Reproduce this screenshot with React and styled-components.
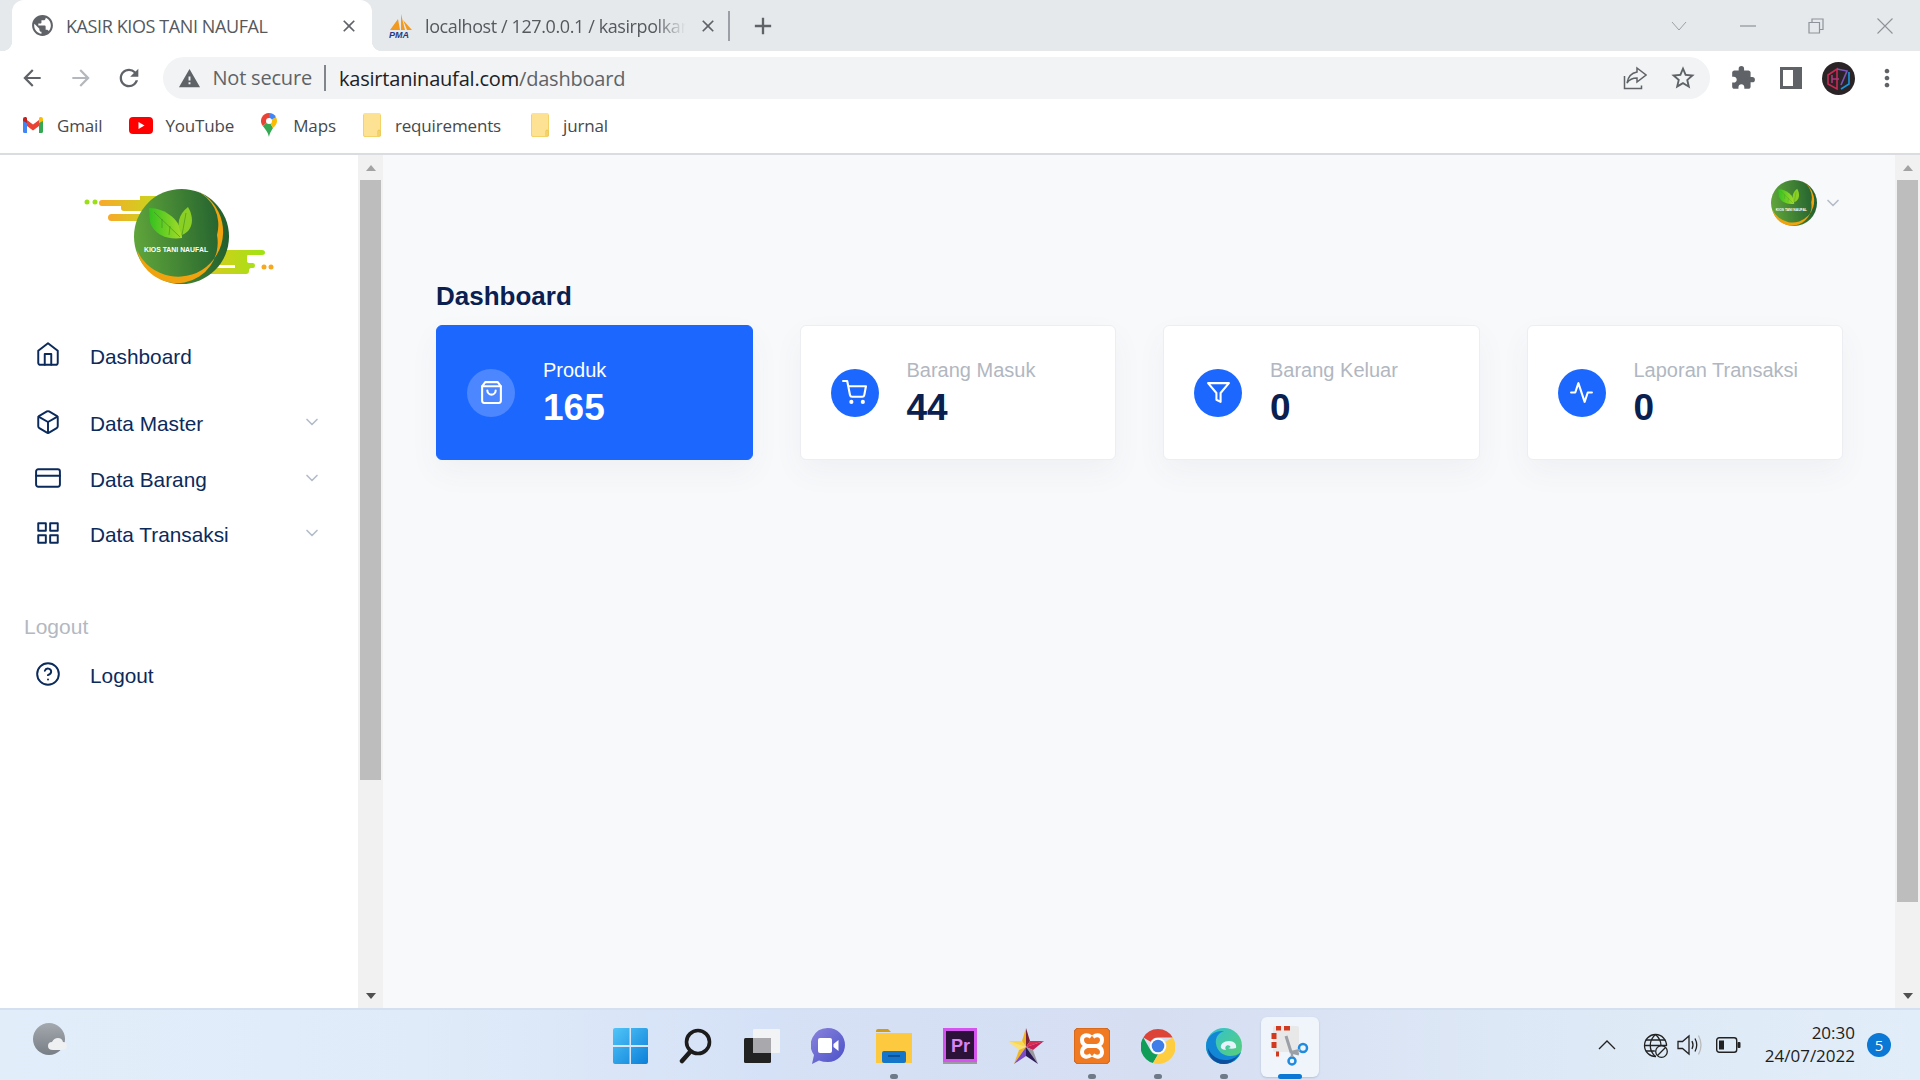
import React from "react";
import styled, { createGlobalStyle } from "styled-components";
import { FiHome, FiBox, FiCreditCard, FiGrid, FiHelpCircle, FiChevronDown, FiShoppingBag, FiShoppingCart, FiFilter, FiActivity } from "react-icons/fi";
import { MdArrowBack, MdArrowForward, MdRefresh, MdWarning, MdStarBorder, MdExtension, MdMoreVert, MdPublic, MdClose, MdAdd } from "react-icons/md";

const GlobalStyle = createGlobalStyle`
  html, body {
    margin: 0;
    padding: 0;
    width: 1920px;
    height: 1080px;
    overflow: hidden;
    background: #fff;
    font-family: "Liberation Sans", Arial, sans-serif;
  }
  * { box-sizing: border-box; }
`;

const Screen = styled.div`
  width: 1920px;
  height: 1080px;
  display: flex;
  flex-direction: column;
  overflow: hidden;
`;

/* browser chrome */
const TabStrip = styled.div`
  height: 51px;
  background: #e6e9ec;
  display: flex;
  align-items: stretch;
  flex: none;
`;

const ActiveTab = styled.div`
  position: relative;
  width: 360px;
  margin-left: 12px;
  padding: 0 13px 0 18px;
  background: #fff;
  border-radius: 12px 12px 0 0;
  display: flex;
  align-items: center;
  gap: 11px;
  color: #5f6368;

  &::before, &::after {
    content: "";
    position: absolute;
    bottom: 0;
    width: 10px;
    height: 10px;
  }
  &::before {
    left: -10px;
    background: radial-gradient(circle at 0 0, #e6e9ec 10px, #fff 10.5px);
  }
  &::after {
    right: -10px;
    background: radial-gradient(circle at 100% 0, #e6e9ec 10px, #fff 10.5px);
  }
`;

const TabTitle = styled.span`
  flex: 1;
  font-family: "Open Sans", sans-serif;
  font-size: 18px;
  letter-spacing: -0.4px;
  white-space: nowrap;
  overflow: hidden;
  color: ${(p) => p.$color || "#55595e"};
  ${(p) => p.$fade && "-webkit-mask-image: linear-gradient(90deg, #000 88%, transparent 100%);"}
`;

const SecondTab = styled.div`
  width: 356px;
  padding: 0 10px 0 17px;
  display: flex;
  align-items: center;
  gap: 12px;
  color: #5f6368;
`;

const TabDivider = styled.div`
  width: 2px;
  height: 30px;
  margin: 11px 0 0;
  background: #9aa0a6;
`;

const NewTab = styled.div`
  width: 66px;
  display: flex;
  align-items: center;
  justify-content: center;
  color: #5f6368;
`;

const WindowControls = styled.div`
  margin-left: auto;
  display: flex;
  align-items: center;
  padding-right: 1px;
`;

const WindowButton = styled.div`
  width: 68.5px;
  display: flex;
  align-items: center;
  justify-content: center;
`;

const Toolbar = styled.div`
  height: 48px;
  padding: 6px 0 0 8px;
  background: #fff;
  display: flex;
  align-items: center;
  flex: none;
`;

const NavButton = styled.div`
  width: 48.5px;
  display: flex;
  justify-content: center;
  color: ${(p) => (p.$muted ? "#b4b7bb" : "#5f6368")};
`;

const Omnibox = styled.div`
  width: 1547px;
  height: 42px;
  margin-left: 9px;
  padding: 0 13px 0 15px;
  background: #f1f3f4;
  border-radius: 21px;
  display: flex;
  align-items: center;
  color: #5f6368;
  font-family: "Open Sans", sans-serif;
  font-size: 20px;
  letter-spacing: -0.2px;
`;

const SecurityLabel = styled.span`
  margin-left: 12px;
  padding-right: 12px;
  border-right: 2px solid #80868b;
  line-height: 26px;
`;

const UrlHost = styled.span`
  margin-left: 13px;
  color: #202124;
`;

const OmniActions = styled.div`
  margin-left: auto;
  display: flex;
  align-items: center;
  gap: 22px;
`;

const ToolActions = styled.div`
  margin-left: 9px;
  display: flex;
  align-items: center;
`;

const ToolSlot = styled.div`
  width: 48px;
  display: flex;
  justify-content: center;
  color: #5f6368;
`;

const Bookmarks = styled.div`
  height: 54px;
  padding: 0 0 2px 22px;
  background: #fff;
  display: flex;
  align-items: center;
  flex: none;
`;

const Bookmark = styled.div`
  display: flex;
  align-items: center;
  gap: ${(p) => p.$gap || 13}px;
  margin-right: ${(p) => p.$mr || 27}px;
  font-family: "Open Sans", sans-serif;
  font-size: 17px;
  letter-spacing: -0.15px;
  color: #46494d;
`;

/* page */
const Page = styled.div`
  flex: 1;
  min-height: 0;
  display: flex;
  border-top: 2px solid #dadce0;
`;

const Sidebar = styled.aside`
  width: 358px;
  padding-top: 20px;
  background: #fff;
  flex: none;
`;

const LogoWrap = styled.div`
  height: 120px;
  padding-left: 70px;
  margin-bottom: 47px;
`;

const NavRow = styled.div`
  height: 30px;
  margin-top: ${(p) => p.$top || 0}px;
  padding: 0 36px 0 35px;
  display: flex;
  align-items: center;
  font-size: 20.8px;
  color: #0b2a5c;

  > svg:first-child {
    margin-right: 29px;
    margin-top: ${(p) => p.$iconTop ?? -4}px;
  }
`;

const Caret = styled(FiChevronDown)`
  margin-left: auto;
  margin-top: -4px;
  color: #b4bcc8;
`;

const SectionLabel = styled.div`
  margin: 64px 0 0 24px;
  font-size: 21px;
  line-height: 26px;
  color: #b3b8c1;
`;

const Scrollbar = styled.div`
  width: 25px;
  padding: 0 2px;
  background: #f1f1f1;
  display: flex;
  flex-direction: column;
  align-items: stretch;
  flex: none;
`;

const ScrollArrow = styled.div`
  height: 25px;
  display: flex;
  align-items: center;
  justify-content: center;
  margin-top: ${(p) => (p.$down ? "auto" : "0")};

  &::before {
    content: "";
    border-left: 5px solid transparent;
    border-right: 5px solid transparent;
    ${(p) => (p.$down ? "border-top: 6px solid #505050;" : "border-bottom: 6px solid #a3a3a3;")}
  }
`;

const ScrollThumb = styled.div`
  height: ${(p) => p.$h}px;
  background: #bdbdbd;
`;

const Main = styled.main`
  flex: 1;
  min-width: 0;
  padding: 25px 52px 0 53px;
  background: #f8f9fb;
`;

const TopBar = styled.div`
  display: flex;
  justify-content: flex-end;
  align-items: center;
  gap: 6px;
  height: 46px;
`;

const TopCaret = styled(FiChevronDown)`
  color: #b4bcc8;
`;

const Title = styled.h1`
  margin: 55px 0 14px;
  font-size: 26px;
  line-height: 30px;
  font-weight: 700;
  color: #0a2050;
`;

const CardGrid = styled.div`
  display: grid;
  grid-template-columns: repeat(4, 1fr);
  gap: 47px;
`;

const Card = styled.div`
  height: 135px;
  padding-left: 30px;
  display: flex;
  align-items: center;
  gap: 28px;
  border-radius: 6px;
  border: 1px solid ${(p) => (p.$primary ? "#1c68ff" : "#eceef2")};
  background: ${(p) => (p.$primary ? "#1c68ff" : "#fff")};
  box-shadow: 0 12px 30px rgba(60, 70, 90, 0.05);
`;

const CardIcon = styled.div`
  width: 48px;
  height: 48px;
  border-radius: 50%;
  display: flex;
  align-items: center;
  justify-content: center;
  background: ${(p) => (p.$primary ? "#4d87ff" : "#1c68ff")};
  color: #fff;
  flex: none;
`;

const CardText = styled.div`
  padding-top: 2px;
`;

const CardLabel = styled.div`
  font-size: 20px;
  line-height: 24px;
  color: ${(p) => (p.$primary ? "#fff" : "#b1b7c1")};
`;

const CardValue = styled.div`
  margin-top: 5px;
  font-size: 37px;
  line-height: 42px;
  font-weight: 700;
  color: ${(p) => (p.$primary ? "#fff" : "#0a2050")};
`;

/* windows taskbar */
const Taskbar = styled.footer`
  height: 72px;
  flex: none;
  display: grid;
  grid-template-columns: 1fr auto 1fr;
  align-items: center;
  border-top: 2px solid #d4dff0;
  background: linear-gradient(90deg, #e1eefa 0%, #e0ebf9 22%, #d5e1f6 40%, #d6def2 60%, #dde8f6 78%, #e1edf8 100%);
`;

const Weather = styled.div`
  padding: 0 0 10px 33px;
  display: flex;
`;

const Apps = styled.div`
  display: flex;
`;

const AppSlot = styled.div`
  position: relative;
  width: 66px;
  height: 58px;
  margin: 2px 0 0;
  display: flex;
  align-items: center;
  justify-content: center;

  ${(p) => p.$active && `
    &::before {
      content: "";
      position: absolute;
      inset: 0 4px -2px 4px;
      background: #f0f5fc;
      border-radius: 6px;
      box-shadow: 0 1px 2px rgba(80, 100, 130, 0.25);
    }
  `}

  > svg { position: relative; }
`;

const AppDot = styled.span`
  position: absolute;
  bottom: -4px;
  left: 50%;
  width: ${(p) => (p.$active ? 24 : 8)}px;
  height: 5px;
  margin-left: ${(p) => (p.$active ? -12 : -4)}px;
  border-radius: 3px;
  background: ${(p) => (p.$active ? "#0a78d4" : "#6f7a88")};
`;

const Tray = styled.div`
  display: flex;
  justify-content: flex-end;
  align-items: center;
  padding-right: 29px;
  color: #222;
`;

const TrayIcon = styled.div`
  display: flex;
  margin-right: ${(p) => p.$mr}px;
`;

const Clock = styled.div`
  font-family: "Open Sans", sans-serif;
  font-size: 17px;
  line-height: 23px;
  text-align: right;
  color: #1c1c1c;
  margin-top: -2px;
`;

const Badge = styled.div`
  width: 24px;
  height: 24px;
  margin-left: 12px;
  border-radius: 50%;
  background: #0a78d4;
  color: #fff;
  font-family: "Open Sans", sans-serif;
  font-size: 15px;
  display: flex;
  align-items: center;
  justify-content: center;
`;

/* drawings */
const Logo = ({ id, full }) => (
  <svg width={full ? 220 : 46} height={full ? 120 : 46} viewBox={full ? "0 0 220 120" : "64 14 95 95"}>
    <defs>
      <linearGradient id={id + "g"} x1="0" x2="1" y1="0.3" y2="0.2">
        <stop offset="0" stopColor="#5ea43a" />
        <stop offset="1" stopColor="#1f5c2e" />
      </linearGradient>
      <linearGradient id={id + "s"} x1="0" x2="1">
        <stop offset="0" stopColor="#f8a92a" />
        <stop offset="1" stopColor="#c6d81c" />
      </linearGradient>
      <linearGradient id={id + "t"} x1="0" x2="1">
        <stop offset="0" stopColor="#e3c71e" />
        <stop offset="1" stopColor="#9fe414" />
      </linearGradient>
      <linearGradient id={id + "l"} x1="0" x2="1">
        <stop offset="0" stopColor="#32c020" />
        <stop offset="1" stopColor="#a6dc28" />
      </linearGradient>
    </defs>
    {full && (
      <g>
        <circle cx="17" cy="27" r="2.500" fill="#9be015" />
        <circle cx="25" cy="27" r="2.500" fill="#9be015" />
        <path d="M32 25h38v-4h20v15H54q-3 0-3-3v-2H32q-3 0-3-3t3-3z" fill={`url(#${id}s)`} />
        <rect x="38" y="39" width="45" height="7" rx="3.500" fill={`url(#${id}s)`} />
        <path d="M150 75h42q3 0 3 2.500t-3 2.500h-14q-1 0-1 2v4q0 2 3 2h3q2 0 2 2.500t-2 2.500h-2q-2 0-2 3t-3 3h-48z" fill={`url(#${id}t)`} />
        <rect x="135" y="90" width="30" height="3" fill="#fff" />
        <circle cx="194" cy="92" r="2.500" fill="#f6a81e" />
        <circle cx="201" cy="92" r="2.500" fill="#f6a81e" />
      </g>
    )}
    <circle cx="111.500" cy="61.500" r="47.500" fill={`url(#${id}g)`} />
    <path d="M125 15A45 45 0 1 1 67 75A40 40 0 0 0 147 60A38 38 0 0 0 125 15z" fill="#f0a30f" />
    <path d="M79 33C95 33 112 45 112 63C98 65 84 60 80 47z" fill={`url(#${id}l)`} />
    <path d="M118 32C124 42 124 55 112 60C106 50 108 40 118 32z" fill="#8ad024" />
    <path d="M84 37L110 62M92 44v9M100 51l-1 9M116 38L112 60" stroke="#3d8f24" strokeWidth="0.600" fill="none" />
    <text x="106" y="77" textAnchor="middle" fontFamily="Liberation Sans" fontWeight="700" fontSize="6.900" fill="#fff">KIOS TANI NAUFAL</text>
  </svg>
);

const GmailIcon = () => (
  <svg width="22" height="18" viewBox="0 0 22 18">
    <path d="M1 17V3l4 3v11H2.500Q1 17 1 15.500z" fill="#4285f4" />
    <path d="M21 17V3l-4 3v11h2.500q1.500 0 1.500-1.500z" fill="#34a853" />
    <path d="M5 10V4l6 4.500L17 4v6l-6 4.500z" fill="#ea4335" />
    <path d="M1 5V3q0-2.500 3-2L5 2v5z" fill="#c5221f" />
    <path d="M21 5V3q0-2.500-3-2l-1 1v5z" fill="#fbbc04" />
  </svg>
);

const YoutubeIcon = () => (
  <svg width="24" height="17" viewBox="0 0 24 17">
    <rect width="24" height="17" rx="4" fill="#f00" />
    <path d="M9.500 5v7l6-3.500z" fill="#fff" />
  </svg>
);

const MapsIcon = () => (
  <svg width="16" height="24" viewBox="0 0 16 24">
    <path d="M8 0a8 8 0 0 0-6.200 13L8 8z" fill="#ea4335" />
    <path d="M1.800 13C4 16 7 19 8 24c1-5 3-7 4-9L8 8z" fill="#34a853" />
    <path d="M12 15q4-3.500 4-7a8 8 0 0 0-1-3.800L8 8z" fill="#fbbc04" />
    <path d="M8 0a8 8 0 0 1 7 4.200L8 8z" fill="#4285f4" />
    <circle cx="8" cy="8" r="3" fill="#fff" />
  </svg>
);

const BookmarkFolder = () => (
  <svg width="18" height="24" viewBox="0 0 18 24">
    <path d="M2 0h14q2 0 2 2v20q0 2-2 2H2q-2 0-2-2V2q0-2 2-2z" fill="#fde293" />
    <path d="M0.500 2v20q0 1.500 1.500 1.500h14q1.500 0 1.500-1.500V2" fill="none" stroke="#f3d268" />
    <path d="M15 23v-5q0-1 1-1t1 1v5" fill="none" stroke="#e9c24a" />
  </svg>
);

const PmaIcon = () => (
  <svg width="24" height="26" viewBox="0 0 24 26">
    <path d="M1 17L9 6l2 11zM12 17V1l4 16zM14 7l9 10h-5z" fill="#f29a1f" />
    <text x="0" y="25" fontFamily="Liberation Sans" fontWeight="700" fontStyle="italic" fontSize="9" fill="#1f3c88">PMA</text>
  </svg>
);

const ShareIcon = () => (
  <svg width="24" height="24" viewBox="0 0 24 24" fill="none" stroke="#5f6368" strokeWidth="1.500">
    <path d="M1.500 10v12.500h17v-3" />
    <path d="M14 2l9 7-9 7v-4c-5 0-8 2-10 5 1-6 4-10 10-11z" />
  </svg>
);

const SidePanelIcon = () => (
  <svg width="22" height="22" viewBox="0 0 22 22">
    <path d="M0 0h22v22H0z" fill="#5f6368" />
    <path d="M3 3h10v16H3z" fill="#fff" />
  </svg>
);

const ProfileIcon = () => (
  <svg width="33" height="33" viewBox="0 0 33 33" fill="none">
    <circle cx="16.500" cy="16.500" r="16.500" fill="#2a2427" />
    <path d="M6 13l9-6v20l-9-5z" stroke="#c72a55" strokeWidth="1.600" />
    <path d="M15 7l10 2-6 14" stroke="#7b56b8" strokeWidth="1.600" />
    <path d="M27 10v12l-8 5" stroke="#1b97e0" strokeWidth="1.600" />
    <path d="M10 13v8M10 17h7" stroke="#a83a7a" strokeWidth="1.600" />
  </svg>
);

const WinChevron = () => (
  <svg width="16" height="10" viewBox="0 0 16 10" fill="none" stroke="#9aa0a6" strokeWidth="1">
    <path d="M1 1l7 8 7-8" />
  </svg>
);

const WinMin = () => (
  <svg width="16" height="2" viewBox="0 0 16 2"><path d="M0 1h16" stroke="#8d9399" strokeWidth="1.200" /></svg>
);

const WinRestore = () => (
  <svg width="16" height="16" viewBox="0 0 16 16" fill="none" stroke="#8d9399" strokeWidth="1.200">
    <path d="M1 4.500h10.500V15H1z" />
    <path d="M4 4.500V1h11v10.500h-3.500" />
  </svg>
);

const WinClose = () => (
  <svg width="16" height="16" viewBox="0 0 16 16" fill="none" stroke="#8d9399" strokeWidth="1.100">
    <path d="M0.500 0.500l15 15M15.500 0.500l-15 15" />
  </svg>
);

const WeatherIcon = () => (
  <svg width="36" height="34" viewBox="0 0 36 34">
    <defs>
      <linearGradient id="moon" x1="0" x2="0" y1="0" y2="1">
        <stop offset="0" stopColor="#a3a9ae" />
        <stop offset="1" stopColor="#787e85" />
      </linearGradient>
    </defs>
    <circle cx="16" cy="16" r="16" fill="url(#moon)" />
    <path d="M20 27q-5 0-5-4t4-4q2-4 6-4t5 4q4 0 4 4t-4 4z" fill="#eef0f2" />
  </svg>
);

const WinLogo = () => (
  <svg width="35" height="36" viewBox="0 0 35 36">
    <defs>
      <linearGradient id="winA" x1="0" x2="1" y1="0" y2="1">
        <stop offset="0" stopColor="#52c5f8" />
        <stop offset="1" stopColor="#0a7fd8" />
      </linearGradient>
    </defs>
    <path d="M2 0h14.500v17H0V2q0-2 2-2zM18 0h15q2 0 2 2v15H18zM0 19h16.500v17H2q-2 0-2-2zM18 19h17v15q0 2-2 2H18z" fill="url(#winA)" />
  </svg>
);

const SearchIcon = () => (
  <svg width="34" height="36" viewBox="0 0 34 36" fill="none" stroke="#1c1c1c" strokeLinecap="round">
    <circle cx="19" cy="14" r="11.500" strokeWidth="3.600" />
    <path d="M11 24l-8 9" strokeWidth="4.500" />
  </svg>
);

const TaskViewIcon = () => (
  <svg width="36" height="34" viewBox="0 0 36 34">
    <rect x="0" y="9" width="27" height="25" rx="1.500" fill="#222" />
    <rect x="9" y="0" width="27" height="24" rx="1" fill="#f5f5f5" fillOpacity="0.9" />
    <rect x="9" y="9" width="18" height="15" fill="#a9a9ad" />
  </svg>
);

const ChatIcon = () => (
  <svg width="34" height="36" viewBox="0 0 34 36">
    <defs>
      <linearGradient id="chat" x1="0" x2="1" y1="0" y2="1">
        <stop offset="0" stopColor="#8a84dc" />
        <stop offset="1" stopColor="#4a50c8" />
      </linearGradient>
    </defs>
    <path d="M17 0a17 17 0 0 1 0 34q-5 0-9-1.500L1 36l2-9A17 17 0 0 1 17 0z" fill="url(#chat)" />
    <rect x="7" y="10" width="14" height="15" rx="2" fill="#fff" />
    <path d="M22.500 16l5-4v11l-5-4z" fill="#fff" />
  </svg>
);

const FolderIcon = () => (
  <svg width="36" height="34" viewBox="0 0 36 34">
    <path d="M0 2q0-2 2-2h10l3 3h-15z" fill="#d69c10" />
    <path d="M0 4h36v30H0z" fill="#fdc93f" />
    <rect x="6" y="22" width="24" height="12" rx="2" fill="#1576c9" />
    <rect x="12" y="26" width="12" height="2" fill="#0d5299" />
  </svg>
);

const PremiereIcon = () => (
  <svg width="36" height="36" viewBox="0 0 36 36">
    <rect width="34" height="34" x="1" fill="#d454f0" />
    <rect width="28" height="28" x="4" y="3" fill="#2c1238" />
    <rect x="1" y="34" width="34" height="2" fill="#9c9aa0" />
    <text x="9" y="24" fontFamily="Liberation Sans" fontWeight="700" fontSize="18" fill="#d885f2">Pr</text>
  </svg>
);

const StarIcon = () => (
  <svg width="36" height="36" viewBox="0 0 36 36">
    <path d="M18 0l4 13-4 6z" fill="#7c2236" />
    <path d="M18 0l-4 13 4 6z" fill="#f0b420" />
    <path d="M22 13h14l-18 6z" fill="#d92c50" />
    <path d="M14 13H0l18 6z" fill="#f9d64a" />
    <path d="M36 13L25 22 18 19z" fill="#c71e55" />
    <path d="M0 13l11 9 7-3z" fill="#fbe074" />
    <path d="M25 22l5 14-12-17z" fill="#9a9a9e" />
    <path d="M11 22L6 36l12-17z" fill="#f3b61f" />
    <path d="M30 36l-12-8V19z" fill="#2b1a55" />
    <path d="M6 36l12-8V19z" fill="#7a4bc4" />
  </svg>
);

const XamppIcon = () => (
  <svg width="36" height="36" viewBox="0 0 36 36" fill="none">
    <rect width="36" height="36" rx="5" fill="#f07a22" />
    <rect width="36" height="36" rx="5" fill="none" stroke="#c65a12" strokeWidth="1" />
    <path d="M17 9c-4-3-9-2-9 3 0 3 2 5 5 6-3 1-5 3-5 6 0 5 5 6 9 3M19 9c4-3 9-2 9 3 0 3-2 5-5 6 3 1 5 3 5 6 0 5-5 6-9 3M14 18h8" stroke="#fff" strokeWidth="4" />
  </svg>
);

const ChromeIcon = () => (
  <svg width="34" height="36" viewBox="0 0 34 34">
    <path d="M17 0a17 17 0 0 1 14.700 8.500H17a8.500 8.500 0 0 0-7.400 4.300L2.300 8.500A17 17 0 0 1 17 0z" fill="#db4437" />
    <path d="M2.300 8.500l7.300 12.700A8.500 8.500 0 0 0 17 25.500L12 34A17 17 0 0 1 2.300 8.500z" fill="#0f9d58" />
    <path d="M31.700 8.500A17 17 0 0 1 12 34l5-8.500a8.500 8.500 0 0 0 7.400-12.700z" fill="#ffcd40" />
    <circle cx="17" cy="17" r="8" fill="#fff" />
    <circle cx="17" cy="17" r="6.300" fill="#3f7de8" />
  </svg>
);

const EdgeIcon = () => (
  <svg width="36" height="36" viewBox="0 0 36 36">
    <defs>
      <linearGradient id="edgeA" x1="0" x2="1" y1="0" y2="1">
        <stop offset="0" stopColor="#2fc1d8" />
        <stop offset="1" stopColor="#5ed06a" />
      </linearGradient>
    </defs>
    <circle cx="18" cy="18" r="18" fill="url(#edgeA)" />
    <path d="M0 18C0 8 9 2 18 3c-6 2-9 7-8 13 1 7 7 12 14 12 4 0 8-1 11-4-2 7-9 12-17 12C8 36 0 28 0 18z" fill="#1287d6" />
    <path d="M18 36C9 36 2 29 2 20c3 8 10 12 17 12 6 0 11-2 14-6-3 6-9 10-15 10z" fill="#0c4f9e" />
    <path d="M15 20c-1-4 3-7 8-7 5 0 8 3 7 7-3 1-6 1-8 0 2 0 3-1 2-2-3-2-6 1-4 4-2 0-4-1-5-2z" fill="#e8f2fa" />
  </svg>
);

const SnipIcon = () => (
  <svg width="40" height="40" viewBox="0 0 40 40" fill="none">
    <rect x="3" y="0" width="26" height="26" rx="2" fill="#e8e8e8" />
    <path d="M5 0h5M13 0h6M3 5v6M3 14v6M5 26h3" stroke="#d13a1e" strokeWidth="5" transform="translate(1 2)" />
    <path d="M16 10l5 16 8 2" stroke="#9aa0a6" strokeWidth="3" />
    <circle cx="33" cy="22" r="4" stroke="#1e8be0" strokeWidth="2.500" />
    <circle cx="22" cy="35" r="3.500" stroke="#1e8be0" strokeWidth="2.500" />
    <path d="M22 31v-5l8-2" stroke="#9aa0a6" strokeWidth="2.500" />
  </svg>
);

const GlobeBlocked = () => (
  <svg width="25" height="25" viewBox="0 0 25 25" fill="none" stroke="#222" strokeWidth="1.300">
    <path d="M13 23.500A11 11 0 1 1 23.500 13" />
    <path d="M1.500 12.500h22M2.800 7h19.500M2.800 18h9M12.500 1.500c-7 6-7 16 0 22M12.500 1.500c4 3.500 5.500 8 5.500 11" />
    <circle cx="18.500" cy="18.500" r="5.800" />
    <path d="M14.500 22.500l8-8" />
  </svg>
);

const Speaker = () => (
  <svg width="26" height="24" viewBox="0 0 26 24" fill="none" stroke="#222" strokeWidth="1.300">
    <path d="M1 8.500v7h4.500L12 21V3L5.500 8.500z" />
    <path d="M15 8q2 4 0 8M18 5.500q3.500 6.500 0 13" />
    <path d="M21.500 2.500q5 9.500 0 19" stroke="#bbb" />
  </svg>
);

const Battery = () => (
  <svg width="25" height="16" viewBox="0 0 25 16" fill="none">
    <rect x="0.700" y="0.700" width="20" height="14.600" rx="2.500" stroke="#222" strokeWidth="1.400" />
    <rect x="3" y="3.500" width="5" height="9" fill="#222" />
    <rect x="21.500" y="5" width="3" height="6" rx="1" fill="#222" />
  </svg>
);

const TrayChevron = () => (
  <svg width="18" height="10" viewBox="0 0 18 10" fill="none" stroke="#222" strokeWidth="1.300">
    <path d="M1 9l8-8 8 8" />
  </svg>
);

const menu = [
  { icon: FiHome, label: "Dashboard", top: 0, iconTop: -6 },
  { icon: FiBox, label: "Data Master", top: 37, iconTop: -5, caret: true },
  { icon: FiCreditCard, label: "Data Barang", top: 26, caret: true },
  { icon: FiGrid, label: "Data Transaksi", top: 25, caret: true },
];

const cards = [
  { icon: FiShoppingBag, label: "Produk", value: "165", primary: true },
  { icon: FiShoppingCart, label: "Barang Masuk", value: "44" },
  { icon: FiFilter, label: "Barang Keluar", value: "0" },
  { icon: FiActivity, label: "Laporan Transaksi", value: "0" },
];

const apps = [
  { icon: WinLogo },
  { icon: SearchIcon },
  { icon: TaskViewIcon },
  { icon: ChatIcon },
  { icon: FolderIcon, dot: true },
  { icon: PremiereIcon },
  { icon: StarIcon },
  { icon: XamppIcon, dot: true },
  { icon: ChromeIcon, dot: true },
  { icon: EdgeIcon, dot: true },
  { icon: SnipIcon, active: true },
];

const App = () => (
  <Screen>
    <GlobalStyle />
    <TabStrip>
      <ActiveTab>
        <MdPublic size={25} color="#5f6368" />
        <TabTitle>KASIR KIOS TANI NAUFAL</TabTitle>
        <MdClose size={20} />
      </ActiveTab>
      <SecondTab>
        <PmaIcon />
        <TabTitle $fade>localhost / 127.0.0.1 / kasirpolkam</TabTitle>
        <MdClose size={20} />
      </SecondTab>
      <TabDivider />
      <NewTab><MdAdd size={28} /></NewTab>
      <WindowControls>
        <WindowButton><WinChevron /></WindowButton>
        <WindowButton><WinMin /></WindowButton>
        <WindowButton><WinRestore /></WindowButton>
        <WindowButton><WinClose /></WindowButton>
      </WindowControls>
    </TabStrip>

    <Toolbar>
      <NavButton><MdArrowBack size={26} /></NavButton>
      <NavButton $muted><MdArrowForward size={26} /></NavButton>
      <NavButton><MdRefresh size={28} /></NavButton>
      <Omnibox>
        <MdWarning size={23} />
        <SecurityLabel>Not secure</SecurityLabel>
        <UrlHost>kasirtaninaufal.com</UrlHost>/dashboard
        <OmniActions>
          <ShareIcon />
          <MdStarBorder size={28} />
        </OmniActions>
      </Omnibox>
      <ToolActions>
        <ToolSlot><MdExtension size={26} /></ToolSlot>
        <ToolSlot><SidePanelIcon /></ToolSlot>
        <ToolSlot><ProfileIcon /></ToolSlot>
        <ToolSlot><MdMoreVert size={28} /></ToolSlot>
      </ToolActions>
    </Toolbar>

    <Bookmarks>
      <Bookmark><GmailIcon />Gmail</Bookmark>
      <Bookmark $gap={12}><YoutubeIcon />YouTube</Bookmark>
      <Bookmark $gap={16}><MapsIcon />Maps</Bookmark>
      <Bookmark $gap={14} $mr={30}><BookmarkFolder />requirements</Bookmark>
      <Bookmark $gap={14}><BookmarkFolder />jurnal</Bookmark>
    </Bookmarks>

    <Page>
      <Sidebar>
        <LogoWrap><Logo id="side" full /></LogoWrap>
        {menu.map((item) => (
          <NavRow key={item.label} $top={item.top} $iconTop={item.iconTop}>
            <item.icon size={26} strokeWidth={1.8} />
            {item.label}
            {item.caret && <Caret size={20} />}
          </NavRow>
        ))}
        <SectionLabel>Logout</SectionLabel>
        <NavRow $top={21}>
          <FiHelpCircle size={26} strokeWidth={1.8} />
          Logout
        </NavRow>
      </Sidebar>
      <Scrollbar>
        <ScrollArrow />
        <ScrollThumb $h={600} />
        <ScrollArrow $down />
      </Scrollbar>
      <Main>
        <TopBar>
          <Logo id="avatar" />
          <TopCaret size={20} />
        </TopBar>
        <Title>Dashboard</Title>
        <CardGrid>
          {cards.map((card) => (
            <Card key={card.label} $primary={card.primary}>
              <CardIcon $primary={card.primary}><card.icon size={25} strokeWidth={2} /></CardIcon>
              <CardText>
                <CardLabel $primary={card.primary}>{card.label}</CardLabel>
                <CardValue $primary={card.primary}>{card.value}</CardValue>
              </CardText>
            </Card>
          ))}
        </CardGrid>
      </Main>
      <Scrollbar>
        <ScrollArrow />
        <ScrollThumb $h={722} />
        <ScrollArrow $down />
      </Scrollbar>
    </Page>

    <Taskbar>
      <Weather><WeatherIcon /></Weather>
      <Apps>
        {apps.map((app, i) => (
          <AppSlot key={i} $active={app.active}>
            <app.icon />
            {(app.dot || app.active) && <AppDot $active={app.active} />}
          </AppSlot>
        ))}
      </Apps>
      <Tray>
        <TrayIcon $mr={27}><TrayChevron /></TrayIcon>
        <TrayIcon $mr={9}><GlobeBlocked /></TrayIcon>
        <TrayIcon $mr={13}><Speaker /></TrayIcon>
        <TrayIcon $mr={24}><Battery /></TrayIcon>
        <Clock>20:30<br />24/07/2022</Clock>
        <Badge>5</Badge>
      </Tray>
    </Taskbar>
  </Screen>
);

export default App;
